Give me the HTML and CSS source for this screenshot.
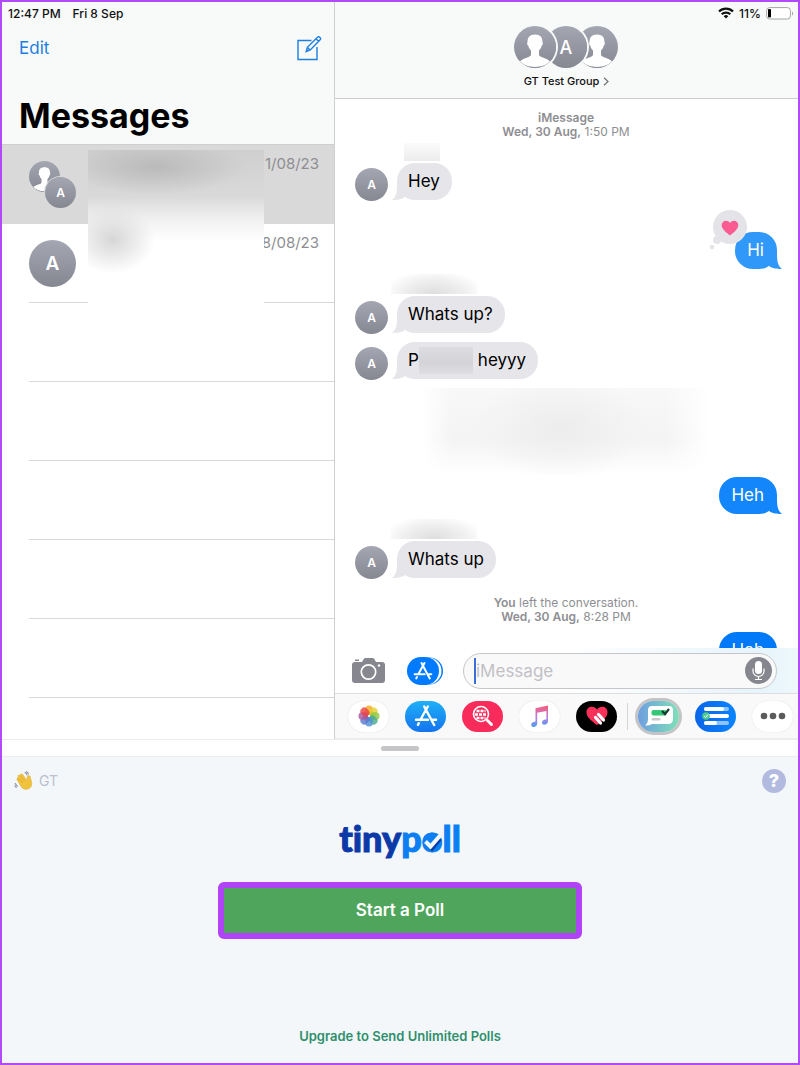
FILE: index.html
```html
<!DOCTYPE html>
<html lang="en">
<head>
    <meta charset="UTF-8">
    <meta name="viewport" content="width=device-width, initial-scale=1.0">
    <title>Messages</title>
    <link rel="stylesheet" href="styles.css">
</head>
<body>
    <!-- Shared icons -->
    <svg class="sprite" aria-hidden="true">
        <symbol id="person" viewBox="0 0 42 42">
            <path fill="#fff" d="M21 8.500c-5.300 0-7.700 3-7.400 7.500-.8.300-.6 3.200.7 3.800.4 2.200 1.500 3.500 2.700 4.700v4.500c-.6 2.500-8 3-11 6.300C9 39 15 41 21 41s12-2 15-5.700C33 32 25.600 31.500 25 29v-4.500c1.200-1.200 2.300-2.500 2.700-4.700 1.300-.6 1.500-3.500.7-3.800C28.700 11.500 26.300 8.500 21 8.500z"/>
        </symbol>
        <symbol id="store" viewBox="0 0 24 24">
            <g fill="none" stroke="#fff" stroke-width="2.400" stroke-linecap="round">
                <path d="M10.200 2.500 18.800 18.500M13.800 2.500 6.300 16M2 15.800h12M18.500 15.800H22M4.800 19.200l-.9 1.600M18.800 18.500l1.400 2.500"/>
            </g>
        </symbol>
    </svg>

    <div class="screen">
        <div class="messages-app">
            <!-- Conversation list -->
            <aside class="sidebar">
                <header class="sidebar-header">
                    <div class="status"><span>12:47 PM</span><span>Fri 8 Sep</span></div>
                    <div class="toolbar">
                        <button class="edit">Edit</button>
                        <button class="compose" aria-label="New message">
                            <svg width="26" height="26" viewBox="0 0 26 26" fill="none" stroke="#1c7fe0" stroke-width="1.400">
                                <path d="M15.500 5.500H2v19h19V12"/>
                                <path d="M10.200 16.500l1.200-4.200L21.500 2.200a1.500 1.500 0 0 1 2.200 0l.4.400a1.500 1.500 0 0 1 0 2.200L14.300 15zM20 3.800l2.500 2.500M11.500 12.500l2.500 2.500"/>
                            </svg>
                        </button>
                    </div>
                    <h1>Messages</h1>
                </header>
                <ul class="threads">
                    <li class="thread selected">
                        <div class="pair">
                            <span class="avatar small"><svg><use href="#person"/></svg></span>
                            <span class="avatar small front">A</span>
                        </div>
                        <time>1/08/23</time>
                    </li>
                    <li class="thread">
                        <span class="avatar large">A</span>
                        <time>8/08/23</time>
                    </li>
                    <li class="thread"></li>
                    <li class="thread"></li>
                    <li class="thread"></li>
                    <li class="thread"></li>
                    <li class="thread"></li>
                    <li class="redacted-list"></li>
                </ul>
            </aside>

            <!-- Open conversation -->
            <main class="chat">
                <header class="chat-header">
                    <div class="status right">
                        <svg width="16" height="12" viewBox="0 0 16 12" fill="none" stroke="#111" stroke-width="2.200">
                            <path d="M1 4.500a10 10 0 0 1 14 0M3.700 7.300a6.200 6.200 0 0 1 8.600 0"/>
                            <path d="M8 11.500 5.700 9.200a3.300 3.300 0 0 1 4.600 0z" fill="#111" stroke="none"/>
                        </svg>
                        <span>11%</span>
                        <svg width="28" height="13" viewBox="0 0 28 13">
                            <rect x=".6" y=".6" width="23.800" height="11.400" rx="3" fill="#fff" stroke="#a5a5a5"/>
                            <rect x="2" y="2" width="3" height="8.600" rx="1" fill="#000"/>
                            <path d="M26 4.500v4c1.500-.8 1.500-3.200 0-4z" fill="#a5a5a5"/>
                        </svg>
                    </div>
                    <div class="group">
                        <span class="avatar medium"><svg><use href="#person"/></svg></span>
                        <span class="avatar medium">A</span>
                        <span class="avatar medium"><svg><use href="#person"/></svg></span>
                    </div>
                    <button class="group-name">GT Test Group
                        <svg width="6" height="9" viewBox="0 0 6 9" fill="none" stroke="#777" stroke-width="1.300"><path d="M1 .8 5 4.500 1 8.200"/></svg>
                    </button>
                </header>

                <div class="log">
                    <p class="meta"><b>iMessage</b><br><b>Wed, 30 Aug,</b> 1:50 PM</p>

                    <div class="sender short"></div>
                    <div class="message">
                        <span class="avatar">A</span>
                        <p class="bubble">Hey</p>
                    </div>

                    <div class="message mine reacted">
                        <p class="bubble light">Hi
                            <svg class="reaction" width="38" height="40" viewBox="0 0 38 40">
                                <g fill="#e4e4e8"><circle cx="20" cy="17" r="17"/><circle cx="7" cy="30" r="4"/><circle cx="2" cy="37" r="2.300"/></g>
                                <path fill="#fa5c92" d="M20 25.500c-4-3.200-8.300-6.500-8.300-10.300 0-5 6-6 8.300-2.200 2.300-3.800 8.300-2.800 8.300 2.200 0 3.800-4.300 7.100-8.300 10.300z"/>
                            </svg>
                        </p>
                    </div>

                    <div class="sender"></div>
                    <div class="message">
                        <span class="avatar">A</span>
                        <p class="bubble">Whats up?</p>
                    </div>
                    <div class="message next">
                        <span class="avatar">A</span>
                        <p class="bubble">P<span class="redacted-name"></span>heyyy</p>
                    </div>

                    <div class="redacted-block"></div>

                    <div class="message mine">
                        <p class="bubble">Heh</p>
                    </div>

                    <div class="sender"></div>
                    <div class="message">
                        <span class="avatar">A</span>
                        <p class="bubble">Whats up</p>
                    </div>

                    <p class="meta left"><b>You</b> left the conversation.<br><b>Wed, 30 Aug,</b> 8:28 PM</p>

                    <div class="message mine next">
                        <p class="bubble deep">Heh</p>
                    </div>
                </div>

                <div class="composer">
                    <button aria-label="Camera">
                        <svg width="35" height="27" viewBox="0 0 35 27">
                            <path fill="#87888f" d="M3 5h7l2-3.500Q12.500 1 13.500 1h7q1 0 1.500.5L24 5h6q3 0 3 3v15q0 3-3 3H3q-3 0-3-3V8q0-3 3-3zM3 2.500h4V4H3z"/>
                            <circle cx="16.500" cy="15" r="7.200" fill="none" stroke="#fff" stroke-width="1.700"/>
                            <circle cx="27" cy="8.500" r="1.200" fill="#fff"/>
                        </svg>
                    </button>
                    <button aria-label="Apps">
                        <svg width="36" height="28" viewBox="0 0 36 28">
                            <rect x="5" y=".5" width="31" height="27" rx="13.500" fill="#007aff"/>
                            <rect x="1" y=".5" width="33.500" height="27" rx="13.500" fill="#fff"/>
                            <rect width="32" height="28" rx="14" fill="#007aff"/>
                            <use href="#store" x="6" y="4" width="20" height="20"/>
                        </svg>
                    </button>
                    <label class="field">
                        <span class="caret"></span>
                        <input type="text" placeholder="iMessage" aria-label="iMessage">
                        <svg width="27" height="27" viewBox="0 0 27 27">
                            <circle cx="13.500" cy="13.500" r="13.500" fill="#86878e"/>
                            <rect x="10" y="4" width="7" height="13" rx="3.500" fill="#fff"/>
                            <path d="M8 11.500v2.500a5.500 5.500 0 0 0 11 0v-2.500M13.500 19.500v3M10 22.500h7" fill="none" stroke="#fff" stroke-width="1.200"/>
                        </svg>
                    </label>
                </div>

                <nav class="apps">
                    <button class="app white" aria-label="Photos">
                        <svg width="24" height="24" viewBox="-12 -12 24 24">
                            <g fill-opacity=".8">
                                <rect x="-3.700" y="-10.500" width="7.400" height="9.500" rx="3.500" fill="#f5a623"/>
                                <rect x="-3.700" y="-10.500" width="7.400" height="9.500" rx="3.500" fill="#e3cf2e" transform="rotate(45)"/>
                                <rect x="-3.700" y="-10.500" width="7.400" height="9.500" rx="3.500" fill="#8cc63f" transform="rotate(90)"/>
                                <rect x="-3.700" y="-10.500" width="7.400" height="9.500" rx="3.500" fill="#46a98b" transform="rotate(135)"/>
                                <rect x="-3.700" y="-10.500" width="7.400" height="9.500" rx="3.500" fill="#4f8ed6" transform="rotate(180)"/>
                                <rect x="-3.700" y="-10.500" width="7.400" height="9.500" rx="3.500" fill="#5a76cc" transform="rotate(225)"/>
                                <rect x="-3.700" y="-10.500" width="7.400" height="9.500" rx="3.500" fill="#a8559c" transform="rotate(270)"/>
                                <rect x="-3.700" y="-10.500" width="7.400" height="9.500" rx="3.500" fill="#e8403f" transform="rotate(315)"/>
                            </g>
                        </svg>
                    </button>
                    <button class="app store" aria-label="App Store">
                        <svg width="24" height="24"><use href="#store"/></svg>
                    </button>
                    <button class="app images" aria-label="Images">
                        <svg width="22" height="22" viewBox="0 0 22 22" fill="none" stroke="#fff">
                            <circle cx="9" cy="9" r="7.500" stroke-width="1.600"/>
                            <path stroke-width="3" stroke-linecap="round" d="M15.500 15.500l4 4"/>
                            <path stroke-width="2.600" stroke-dasharray="3 1" d="M4.500 6h9M3 9.500h12M4.500 13h9"/>
                        </svg>
                    </button>
                    <button class="app white" aria-label="Music">
                        <svg width="20" height="24" viewBox="0 0 20 24">
                            <defs>
                                <linearGradient id="note" x1="0" y1="0" x2="0" y2="1">
                                    <stop offset="0" stop-color="#fb5c74"/>
                                    <stop offset=".55" stop-color="#b77ee0"/>
                                    <stop offset="1" stop-color="#4d9ff5"/>
                                </linearGradient>
                            </defs>
                            <path fill="url(#note)" d="M5.500 4.200 18 1.500v15.800c0 4.200-6 4.600-6 1.200 0-2.600 2.700-2.700 4.400-3.300V7L7.200 8.800v10.700c0 4.200-6 4.600-6 1.200 0-2.600 2.600-2.700 4.300-3.300z"/>
                        </svg>
                    </button>
                    <button class="app touch" aria-label="Digital Touch">
                        <svg width="24" height="22" viewBox="0 0 24 22">
                            <path fill="#fb3159" d="M12 20C6 15.500 1.500 12 1.500 7.200 1.500 1 9 0 12 4.500 15 0 22.500 1 22.500 7.200 22.500 12 18 15.500 12 20z"/>
                            <path stroke="#fff" stroke-width="3.200" stroke-linecap="round" d="M13.500 9.500l5 5.500M10.500 12.500l5 5.500"/>
                        </svg>
                    </button>
                    <span class="separator"></span>
                    <button class="app poll active" aria-label="tinypoll">
                        <svg width="30" height="22" viewBox="0 0 30 22">
                            <path fill="#fff" d="M8 1h17q4 0 4 4v9q0 5-5 5H8q-3 2-7 1.500Q4 18 4 14V5q0-4 4-4z"/>
                            <rect x="7.500" y="5" width="15" height="5.500" rx="2" fill="#35c777"/>
                            <rect x="7.500" y="13" width="9" height="2.500" rx="1" fill="#c9c9cf"/>
                            <path d="M18 6l3 3 4-5" fill="none" stroke="#173a33" stroke-width="2.200"/>
                        </svg>
                    </button>
                    <button class="app survey" aria-label="Surveys">
                        <svg width="28" height="22" viewBox="0 0 28 22">
                            <g fill="#8fc2fb"><rect x="2" y="2" width="25" height="4" rx="2"/><rect x="2" y="16" width="25" height="4" rx="2"/></g>
                            <g fill="#fff"><rect x="2" y="2" width="20" height="4" rx="2"/><rect x="2" y="9" width="25" height="4" rx="2"/><rect x="2" y="16" width="13" height="4" rx="2"/></g>
                            <circle cx="4" cy="11" r="3.800" fill="#4ccb8c"/>
                            <path d="M2.200 11l1.500 1.500L6 9.500" fill="none" stroke="#fff"/>
                        </svg>
                    </button>
                    <button class="app white" aria-label="More">
                        <svg width="26" height="8" viewBox="0 0 26 8" fill="#5b5b5b"><circle cx="4" cy="4" r="3.300"/><circle cx="13" cy="4" r="3.300"/><circle cx="22" cy="4" r="3.300"/></svg>
                    </button>
                </nav>
            </main>
        </div>

        <!-- Poll drawer -->
        <section class="drawer">
            <div class="handle"></div>
            <div class="panel">
                <div class="panel-top">
                    <svg width="20" height="20" viewBox="0 0 20 20">
                        <path fill="#f0c33c" stroke="#d9a32c" stroke-width=".5" d="M3 8.500c-.6-1.300.9-2 1.700-1L4 5.500c-.4-1.400 1.300-2 2-.8L6.500 3.500c.6-1.100 2-.7 2.500.4l4 5.500.2-3.200c0-1.900 2.600-2.300 3-.3.3 2 2 5 1.500 7.800-.7 4.500-6.700 6.200-10 2.800z"/>
                        <path fill="none" stroke="#d9982c" stroke-width=".7" d="M4.700 7.500l4 4.200M6 4.700l4.500 5"/>
                        <path fill="none" stroke="#8d93a5" stroke-width="1.200" stroke-linecap="round" d="M11 1.500c1 .4 1.700 1.200 2 2.300M12.500.8c.9.400 1.500 1 1.800 2M1.300 12.500c.3 1 1 1.900 2 2.500M1 15c.4.600.8 1 1.400 1.300"/>
                    </svg>
                    <span>GT</span>
                    <button class="help" aria-label="Help">?</button>
                </div>
                <div class="logo">tiny<span>p<i>o<svg viewBox="0 0 20 20"><circle cx="10" cy="10" r="9.500" fill="#0c7ff2"/><path d="M9 18.500 18.500 7" fill="none" stroke="#0b3aa8" stroke-width="3"/><path d="M3.500 9.500l5 5L19 2.500" fill="none" stroke="#f3f7fa" stroke-width="4"/></svg></i>ll</span></div>
                <button class="start">Start a Poll</button>
                <a class="upgrade" href="#">Upgrade to Send Unlimited Polls</a>
            </div>
        </section>
    </div>
</body>
</html>
```
FILE: styles.css
```css
* {
    box-sizing: border-box;
}
body {
    margin: 0;
    font-family: Inter, "Liberation Sans", sans-serif;
    color: #000;
    background: #fff;
}
button {
    padding: 0;
    border: 0;
    background: none;
    font-family: inherit;
    cursor: pointer;
}
svg {
    display: block;
    flex: none;
}
h1, p, ul {
    margin: 0;
    padding: 0;
}
.sprite {
    position: absolute;
    width: 0;
    height: 0;
}
.screen {
    display: flex;
    flex-direction: column;
    height: 100vh;
    border: 2px solid #b14bf7;
}
.messages-app {
    display: flex;
    flex: 1;
    min-height: 0;
}

/* Avatars */
.avatar {
    display: flex;
    align-items: center;
    justify-content: center;
    flex: none;
    width: 33px;
    height: 33px;
    border-radius: 50%;
    overflow: hidden;
    background: linear-gradient(#a4a7b2, #858791);
    color: #fff;
    font-size: 12px;
    font-weight: 600;
}
.avatar svg {
    width: 100%;
    height: 100%;
}
.avatar.small {
    width: 31px;
    height: 31px;
}
.avatar.medium {
    width: 42px;
    height: 42px;
    font-size: 18px;
    font-weight: 500;
}
.avatar.large {
    width: 47px;
    height: 47px;
    font-size: 19px;
}

/* Sidebar */
.sidebar {
    display: flex;
    flex-direction: column;
    flex: none;
    width: 333px;
    border-right: 1px solid #cfcfd2;
}
.sidebar-header {
    height: 143px;
    flex: none;
    background: #f8f9f9;
    border-bottom: 1px solid #cfcfcf;
}
.status {
    display: flex;
    align-items: center;
    gap: 12px;
    height: 22px;
    padding-left: 6px;
    font-size: 12px;
    font-weight: 500;
    color: #111;
}
.status.right {
    justify-content: flex-end;
    gap: 5px;
    padding-right: 4px;
}
.toolbar {
    display: flex;
    align-items: center;
    justify-content: space-between;
    height: 48px;
    padding: 0 12px 0 17px;
}
.edit {
    font-size: 17px;
    color: #1c7fe0;
}
h1 {
    margin-top: 22px;
    padding-left: 17px;
    font-size: 34px;
    font-weight: 700;
    line-height: 44px;
}
.threads {
    position: relative;
    flex: 1;
    min-height: 0;
    overflow: hidden;
    list-style: none;
}
.thread {
    display: flex;
    justify-content: space-between;
    align-items: center;
    height: 79px;
    margin-left: 27px;
    padding-right: 15px;
    border-bottom: 1px solid #d9d9db;
}
.thread.selected {
    margin-left: 0;
    padding-left: 27px;
    background: #d9d9d9;
}
.thread time {
    align-self: flex-start;
    margin-top: 9px;
    font-size: 15px;
    line-height: 20px;
    color: #8e8e92;
}
.pair {
    width: 47px;
    height: 47px;
}
.pair .front {
    position: relative;
    margin: -15px 0 0 16px;
    box-shadow: 0 0 0 1px #d9d9d9;
}
.redacted-list {
    position: absolute;
    top: 5px;
    left: 86px;
    width: 176px;
    height: 166px;
    background:
        radial-gradient(ellipse 90px 28px at 38% 10%, #bababa, transparent),
        radial-gradient(ellipse 42px 34px at 14% 54%, #d6d6d6, transparent),
        linear-gradient(#cfcfcf, #d9d9d9 28%, #f1f1f1 42%, #fff 55%);
}

/* Chat */
.chat {
    display: flex;
    flex-direction: column;
    flex: 1;
    min-width: 0;
}
.chat-header {
    flex: none;
    height: 97px;
    background: #f8f9f9;
    border-bottom: 1px solid #cdcdd0;
}
.group {
    display: flex;
    justify-content: center;
}
.group .avatar {
    position: relative;
    margin: 2px -5px 0 -6px;
    box-shadow: 0 0 0 2px #f8f9f9;
}
.group .avatar:first-child {
    z-index: 2;
}
.group .avatar:nth-child(2) {
    z-index: 1;
}
.group-name {
    display: flex;
    align-items: center;
    gap: 4px;
    margin: 4px auto 0;
    font-size: 11px;
    font-weight: 500;
    line-height: 18px;
    color: #111;
}
.log {
    flex: 1;
    min-height: 0;
    overflow: hidden;
    padding: 12px 21px 0 20px;
}
.meta {
    text-align: center;
    font-size: 12px;
    line-height: 14px;
    color: #8e8e92;
}
.meta b {
    font-weight: 600;
}
.meta.left {
    margin-top: 17px;
}
.sender {
    width: 86px;
    height: 20px;
    margin: 4px 0 2px 36px;
    background: radial-gradient(ellipse at 50% 100%, #dededf, #efefef 50%, transparent 85%);
}
.sender.short {
    width: 36px;
    height: 18px;
    margin-left: 49px;
    background: linear-gradient(#fbfbfb, #ececec);
}
.message {
    display: flex;
    align-items: flex-end;
    gap: 9px;
    height: 38px;
}
.message.mine {
    justify-content: flex-end;
}
.message.next {
    margin-top: 8px;
}
.message.reacted {
    margin-top: 31px;
}
.bubble {
    position: relative;
    display: flex;
    align-items: center;
    margin-bottom: 1px;
    padding: 0 12px 1px 11px;
    border-radius: 18px;
    background: #e6e5ea;
    font-size: 17px;
    line-height: 36px;
}
.bubble::before {
    content: "";
    position: absolute;
    left: -5px;
    bottom: 0;
    width: 16px;
    height: 18px;
    background: inherit;
    clip-path: path("M5 0C5 9 5 14 0 18C6 18 9 17 12 16L16 8Z");
}
.mine .bubble {
    padding: 0 13px 1px 12px;
    background: #1486fb;
    color: #fff;
}
.mine .bubble::before {
    left: auto;
    right: -5px;
    transform: scaleX(-1);
}
.mine .bubble.light {
    background: #2f98f8;
}
.mine .bubble.deep {
    background: #017af9;
}
.reaction {
    position: absolute;
    left: -25px;
    top: -22px;
}
.redacted-name {
    width: 54px;
    height: 27px;
    margin-right: 5px;
    background: linear-gradient(#dddce1, #d3d3d8 60%, #dfdee3);
}
.redacted-block {
    height: 87px;
    margin: 8px 68px 2px;
    background:
        radial-gradient(ellipse 30% 60% at 48% 45%, #ededed, transparent),
        linear-gradient(90deg, #fff, transparent 10% 85%, #fff),
        linear-gradient(#f8f8f8, #f4f4f4 60%, #fff);
}
.composer {
    display: flex;
    align-items: center;
    gap: 20px;
    flex: none;
    height: 45px;
    padding: 0 21px 0 17px;
    background: linear-gradient(90deg, #fff 50%, #e6f4fb 92%, #eef8fc);
}
.field {
    display: flex;
    align-items: center;
    flex: 1;
    min-width: 0;
    height: 36px;
    padding: 0 4px 0 10px;
    border: 1px solid #c6c6ca;
    border-radius: 18px;
    background: #f9f9fa;
}
.caret {
    width: 2px;
    height: 26px;
    background: #3a6fd8;
}
.field input {
    flex: 1;
    min-width: 0;
    padding: 0;
    border: 0;
    outline: none;
    background: none;
    font-family: inherit;
    font-size: 17px;
}
.field input::placeholder {
    color: #c1c1c5;
}
.apps {
    display: flex;
    align-items: center;
    gap: 16px;
    flex: none;
    height: 46px;
    padding: 0 5px 0 13px;
    background: #f9f9f9;
    border-top: 1px solid #dededf;
    border-bottom: 1px solid #ececec;
}
.app {
    display: flex;
    align-items: center;
    justify-content: center;
    flex: none;
    width: 41px;
    height: 31px;
    border-radius: 16px;
}
.app.white {
    background: #fff;
    box-shadow: 0 0 1px #ccc;
}
.app.store {
    background: linear-gradient(#1fb0f8, #1473ee);
}
.app.images {
    background: #f92b5b;
}
.app.touch {
    background: #000;
}
.app.poll {
    background: linear-gradient(90deg, #6f9ee0, #7fe0b8);
    box-shadow: 0 0 0 3px #c4c4c6;
}
.app.survey {
    background: linear-gradient(90deg, #0b66e8, #0a84ff);
}
.separator {
    width: 1px;
    height: 27px;
    margin: 0 -6px;
    background: #d4d4d6;
}

/* Drawer */
.drawer {
    flex: none;
}
.handle {
    display: flex;
    align-items: center;
    justify-content: center;
    height: 18px;
    border-top: 1px solid #ececec;
    border-bottom: 1px solid #ebecec;
}
.handle::before {
    content: "";
    width: 38px;
    height: 5px;
    border-radius: 3px;
    background: #c5c5c7;
}
.panel {
    display: flex;
    flex-direction: column;
    align-items: center;
    padding: 12px 12px 18px;
    background: #f3f7fa;
}
.panel-top {
    display: flex;
    align-items: center;
    align-self: stretch;
    gap: 5px;
    font-size: 14px;
    line-height: 22px;
    color: #b9c0ce;
}
.help {
    width: 24px;
    height: 24px;
    margin-left: auto;
    border-radius: 50%;
    background: #b2bbdf;
    color: #fff;
    font-size: 18px;
    font-weight: 800;
    line-height: 24px;
}
.logo {
    margin-top: 24px;
    font-family: Lato, "Open Sans", sans-serif;
    font-size: 36px;
    font-weight: 900;
    font-variant-ligatures: none;
    line-height: 42px;
    color: #0b3aa8;
    -webkit-text-stroke: 1px;
}
.logo span {
    color: #0c7ff2;
}
.logo i {
    position: relative;
    font-style: normal;
}
.logo svg {
    position: absolute;
    left: 0;
    bottom: 8px;
    width: 20px;
    height: 20px;
}
.start {
    width: 100%;
    max-width: 364px;
    height: 57px;
    margin-top: 23px;
    padding-bottom: 2px;
    border: 6px solid #b043f5;
    border-radius: 6px;
    background: #50a55d;
    color: #fff;
    font-size: 17px;
    font-weight: 600;
}
.upgrade {
    margin-top: 88px;
    font-size: 13px;
    font-weight: 600;
    line-height: 18px;
    color: #2f8f6c;
    text-decoration: none;
}
```
